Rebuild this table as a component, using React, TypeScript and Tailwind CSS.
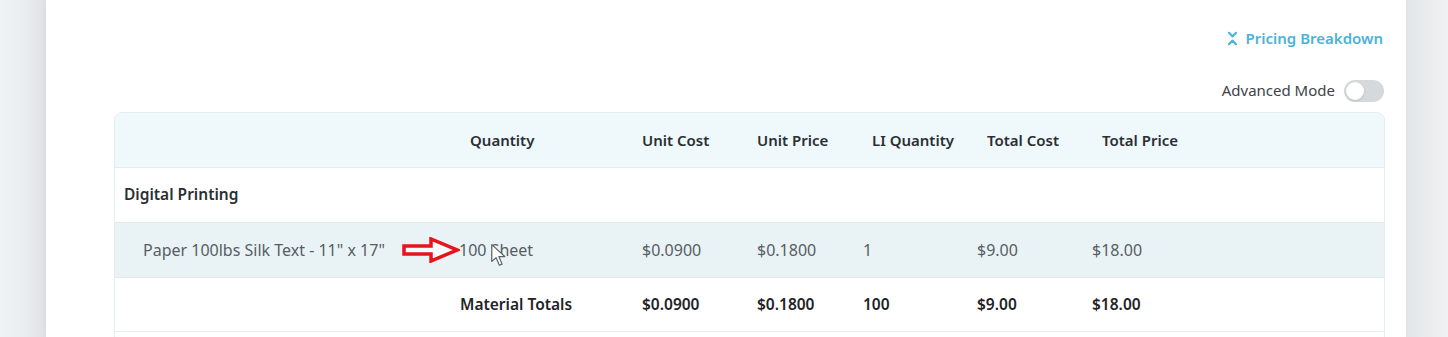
import { ChevronsDownUp } from "lucide-react";

const font = { fontFamily: '"Noto Sans", "Open Sans", Arial, sans-serif' };

const cols = "grid grid-cols-[345px_182px_115px_115px_115px_115px_115px_1fr] items-center";

function RedArrow() {
  return (
    <svg width="58" height="26" viewBox="0 0 58 26" className="absolute left-[-57px] top-[-1px]">
      <path
        d="M2 9 H29 V2 L55 13 L29 24 V17 H2 Z"
        fill="#f7fbfc"
        stroke="#e8141c"
        strokeWidth="3.5"
        strokeLinejoin="miter"
      />
    </svg>
  );
}

function Cursor() {
  return (
    <svg width="22" height="26" viewBox="0 0 20 24" className="absolute left-[31px] top-[5px]">
      <path
        d="M1.5 1.5 L1.5 17 L5.5 13.5 L8.5 20.5 L11 19.5 L8 12.5 L13.5 12.5 Z"
        fill="#ffffff"
        stroke="#5b5f63"
        strokeWidth="1.1"
        strokeLinejoin="round"
      />
    </svg>
  );
}

export default function App() {
  return (
    <div className="w-[1448px] h-[337px] flex overflow-hidden bg-[#eef1f2]" style={font}>
      <div className="w-[46px] h-full shrink-0 bg-gradient-to-r from-[#eef2f3] via-[#eaeef0] to-[#dfe3e5]" />
      <div className="w-[1360px] h-full shrink-0 bg-white shadow-[0_0_6px_rgba(0,0,0,0.06)] pl-[68px] pr-[21px] flex flex-col">
        {/* toolbar */}
        <div className="h-[78px] shrink-0 flex flex-col items-end pt-[28px]">
          <button className="flex items-center gap-[5px] text-[#4cb2da] text-[15px] font-semibold leading-[20px] mr-[2px]">
            <ChevronsDownUp className="w-[17px] h-[17px]" strokeWidth={3} />
            Pricing Breakdown
          </button>
        </div>
        <div className="h-[34px] shrink-0 flex items-start justify-end gap-[9px]">
          <span className="text-[15px] text-[#3f4347] leading-[24px]">Advanced Mode</span>
          <div className="w-[40px] h-[22px] rounded-full bg-[#d5d9dc] p-[2px] mt-[2px] mr-[1px]">
            <div className="w-[18px] h-[18px] rounded-full bg-white shadow-sm" />
          </div>
        </div>

        {/* table */}
        <div className="shrink-0 border border-[#e2eef2] rounded-t-[8px]">
          <div className={`${cols} h-[55px] bg-[#eff9fc] border-b border-[#e2eef2] text-[15px] font-semibold text-[#2b2f33] rounded-t-[8px]`}>
            <div />
            <div className="pl-[10px]">Quantity</div>
            <div>Unit Cost</div>
            <div>Unit Price</div>
            <div>LI Quantity</div>
            <div>Total Cost</div>
            <div>Total Price</div>
            <div />
          </div>
          <div className="h-[54px] flex items-center pl-[9px] text-[15.5px] font-semibold text-[#2b2f33]">Digital Printing</div>
          <div className={`${cols} h-[56px] bg-[#e9f3f6] border-y border-[#dfe9ec] text-[16px] text-[#585d62]`}>
            <div className="pl-[28px]">Paper 100lbs Silk Text - 11" x 17"</div>
            <div className="relative -ml-[1px]">
              <RedArrow />
              100 Sheet
              <Cursor />
            </div>
            <div>$0.0900</div>
            <div>$0.1800</div>
            <div className="-ml-[9px]">1</div>
            <div className="-ml-[10px]">$9.00</div>
            <div className="-ml-[10px]">$18.00</div>
            <div />
          </div>
          <div className={`${cols} h-[54px] border-b border-[#e6eef1] text-[15.5px] font-semibold text-[#1f2327]`}>
            <div />
            <div>Material Totals</div>
            <div>$0.0900</div>
            <div>$0.1800</div>
            <div className="-ml-[9px]">100</div>
            <div className="-ml-[10px]">$9.00</div>
            <div className="-ml-[10px]">$18.00</div>
            <div />
          </div>
          <div className="h-[20px]" />
        </div>
      </div>
      <div className="flex-1 h-full bg-gradient-to-r from-[#e1e5e7] via-[#eaedee] to-[#eff1f2]" />
    </div>
  );
}
